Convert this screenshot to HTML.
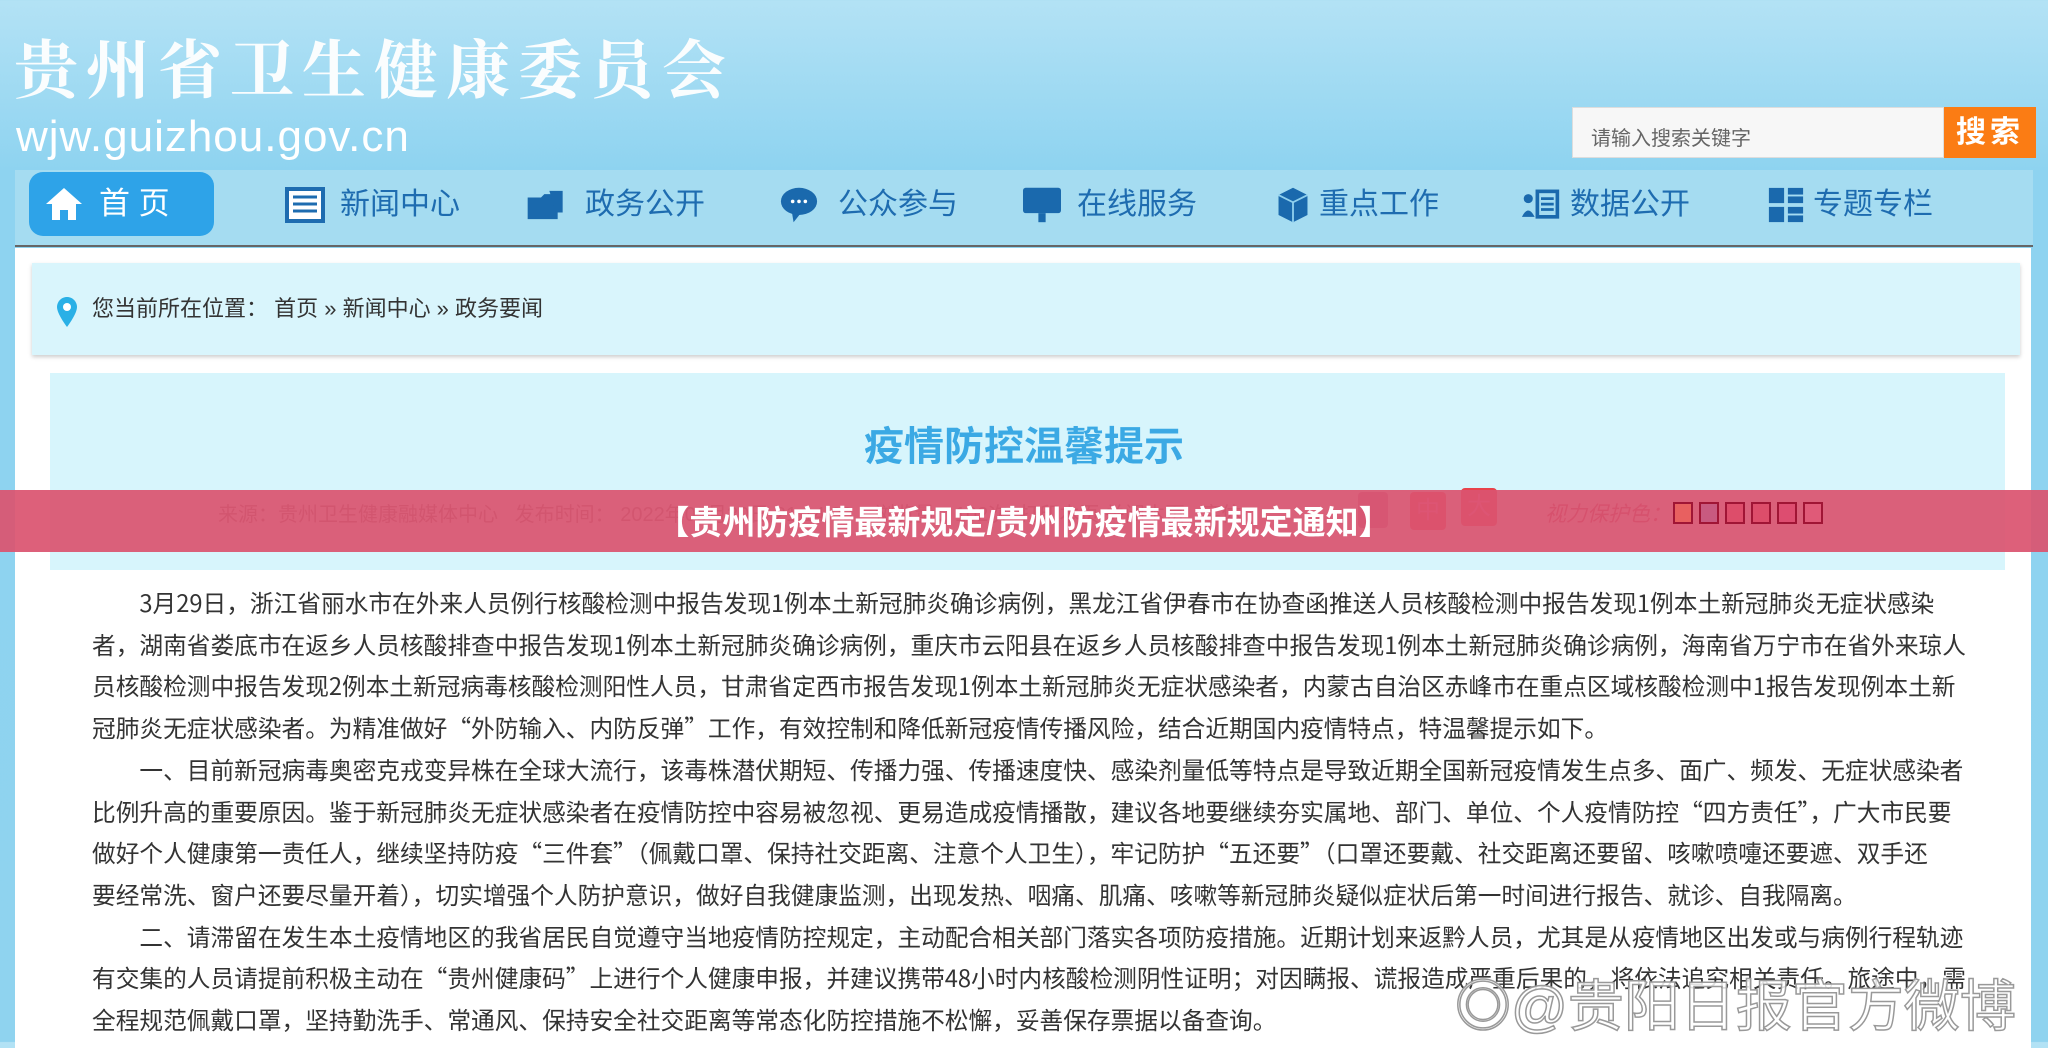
<!DOCTYPE html>
<html><head><meta charset="utf-8"><style>
*{margin:0;padding:0;box-sizing:border-box}
body{width:2048px;height:1042px;overflow:hidden;position:relative;font-family:"Liberation Sans","Noto Sans CJK SC",sans-serif;background:linear-gradient(#b3e2f5,#8ed3f0 170px,#8fd3ef);}
.abs{position:absolute}
.title{left:14px;top:20px;font-family:"Noto Serif CJK SC",serif;font-size:64px;color:#fff;letter-spacing:8px;font-weight:bold;opacity:.95;white-space:nowrap}
.url{left:16px;top:112px;font-size:44px;color:#fff;letter-spacing:1px}
.search{left:1572px;top:107px;width:372px;height:51px;background:#f7f7f7;border:1px solid #ddd;font-size:20px;color:#666;padding:14px 18px}
.sbtn{left:1944px;top:107px;width:92px;height:51px;background:#fb7c14;color:#fff;font-size:30px;font-weight:bold;text-align:center;line-height:51px;letter-spacing:4px}
.nav{left:15px;top:170px;width:2018px;height:77px;background:#a5dcf1;border-bottom:2px solid #666}
.home{left:29px;top:172px;width:185px;height:64px;background:#2ea3e8;border-radius:14px;color:#fff;font-size:31px;line-height:64px;padding-left:70px}
.ni{top:186px;font-size:30px;color:#1e6cb0;line-height:38px}
.ic{top:186px;width:40px;height:38px}
.panel{left:15px;top:248px;width:2016px;height:800px;background:#fff}
.bc{left:32px;top:263px;width:1988px;height:92px;background:#d9f5fc;box-shadow:0 2px 4px #ccc;font-size:22px;color:#333;line-height:92px;padding-left:60px}
.box{left:50px;top:373px;width:1955px;height:197px;background:#d7f5fc}
.h1{left:0;width:2048px;top:414px;text-align:center;font-size:40px;font-weight:bold;color:#3ba9e4}
.meta{left:218px;top:498px;font-size:20px;color:#666}
.band{left:0;top:490px;width:2048px;height:62px;background:rgba(218,84,112,.93)}
.bt{left:0;width:2048px;top:496px;text-align:center;font-size:33px;font-weight:bold;color:#fff}
.txt{left:92px;top:582px;font-family:"Noto Sans CJK SC",sans-serif;font-size:23.7px;color:#333;line-height:41.7px;white-space:nowrap}
.wm{left:1455px;top:962px;font-size:56px;color:rgba(255,255,255,.85);-webkit-text-stroke:1.5px #999;white-space:nowrap}
</style></head><body>
<div class="abs title">贵州省卫生健康委员会</div>
<div class="abs url">wjw.guizhou.gov.cn</div>
<div class="abs search">请输入搜索关键字</div>
<div class="abs sbtn">搜索</div>
<div class="abs nav"></div>
<div class="abs home">首 页</div>
<svg class="abs" style="left:44px;top:186px" width="40" height="36" viewBox="0 0 40 36"><path d="M20 2 L2 18 H8 V34 H16 V24 H24 V34 H32 V18 H38Z" fill="#fff"/></svg>
<svg class="abs ic" style="left:285px" viewBox="0 0 40 38"><rect x="2" y="3" width="36" height="32" fill="#fff" stroke="#1e6cb0" stroke-width="4"/><path d="M8 11h24M8 18h24M8 25h24" stroke="#1e6cb0" stroke-width="3"/></svg>
<div class="abs ni" style="left:340px">新闻中心</div>
<svg class="abs ic" style="left:526px" viewBox="0 0 48 38"><path d="M2 10h16l4-4h16v30H2z" fill="#1a69ad"/><path d="M28 2h16v26h-8z" fill="#1a69ad"/></svg>
<div class="abs ni" style="left:585px">政务公开</div>
<svg class="abs ic" style="left:779px" viewBox="0 0 44 42"><ellipse cx="22" cy="17" rx="20" ry="15" fill="#1a69ad"/><path d="M14 28 L16 40 L24 30Z" fill="#1a69ad"/><circle cx="15" cy="17" r="2" fill="#fff"/><circle cx="22" cy="17" r="2" fill="#fff"/><circle cx="29" cy="17" r="2" fill="#fff"/></svg>
<div class="abs ni" style="left:838px">公众参与</div>
<svg class="abs ic" style="left:1022px" viewBox="0 0 44 42"><rect x="1" y="2" width="42" height="28" rx="3" fill="#1a69ad"/><rect x="18" y="30" width="8" height="10" fill="#1a69ad"/></svg>
<div class="abs ni" style="left:1077px">在线服务</div>
<svg class="abs ic" style="left:1273px" viewBox="0 0 36 42"><path d="M18 2 L34 10 V32 L18 40 L2 32 V10Z" fill="#1a69ad"/><path d="M2 10 L18 18 L34 10" stroke="#8fd0ee" stroke-width="2" fill="none"/><path d="M18 18V40" stroke="#8fd0ee" stroke-width="2"/></svg>
<div class="abs ni" style="left:1319px">重点工作</div>
<svg class="abs ic" style="left:1521px" viewBox="0 0 44 38"><circle cx="8" cy="12" r="5" fill="#1a69ad"/><path d="M1 32 Q8 18 15 32Z" fill="#1a69ad"/><rect x="18" y="4" width="22" height="28" fill="none" stroke="#1a69ad" stroke-width="4"/><path d="M22 12h14M22 18h14M22 24h14" stroke="#1a69ad" stroke-width="3"/></svg>
<div class="abs ni" style="left:1570px">数据公开</div>
<svg class="abs ic" style="left:1766px" viewBox="0 0 40 40"><rect x="2" y="2" width="16" height="16" fill="#1a69ad"/><rect x="22" y="2" width="16" height="7" fill="#1a69ad"/><rect x="22" y="11" width="16" height="7" fill="#1a69ad"/><rect x="2" y="22" width="16" height="16" fill="#1a69ad"/><rect x="22" y="22" width="16" height="7" fill="#1a69ad"/><rect x="22" y="31" width="16" height="7" fill="#1a69ad"/></svg>
<div class="abs ni" style="left:1813px">专题专栏</div>
<div class="abs panel"></div>
<div class="abs bc">您当前所在位置：&nbsp;首页 » 新闻中心 » 政务要闻</div>
<svg class="abs" style="left:56px;top:296px" width="22" height="32" viewBox="0 0 22 32"><path d="M11 1C5 1 1 6 1 11c0 7 10 20 10 20s10-13 10-20C21 6 17 1 11 1z" fill="#2ab0e6"/><circle cx="11" cy="11" r="4" fill="#fff"/></svg>
<div class="abs box"></div>
<div class="abs h1">疫情防控温馨提示</div>
<div class="abs meta">来源：贵州卫生健康融媒体中心&nbsp;&nbsp;&nbsp;发布时间：&nbsp;2022年03月30日 21:14:00&nbsp;&nbsp;&nbsp;&nbsp;浏览量：102次&nbsp;&nbsp;打印本页&nbsp;关闭本页&nbsp;&nbsp;&nbsp;字体</div>
<div class="abs" style="left:1358px;top:492px;width:30px;height:36px;background:#a05a8a;border-radius:4px;opacity:.8"></div>
<div class="abs" style="left:1410px;top:492px;width:36px;height:38px;background:#e8424b;border-radius:4px;color:#f6a;font-size:24px;text-align:center;line-height:38px">中</div>
<div class="abs" style="left:1461px;top:488px;width:36px;height:38px;background:#e8424b;border-radius:4px;color:#f6a;font-size:24px;text-align:center;line-height:38px">大</div>
<div class="abs" style="left:1545px;top:498px;font-size:21px;color:#a0304a;font-style:italic">视力保护色：</div>
<div class="abs band"></div>
<div class="abs" style="left:1673px;top:502px;display:flex;gap:6px">
<i style="width:20px;height:22px;border:2px solid #a01535;background:#e86060"></i><i style="width:20px;height:22px;border:2px solid #a01535;background:#c85a80"></i><i style="width:20px;height:22px;border:2px solid #a01535;background:#dd4d6a"></i><i style="width:20px;height:22px;border:2px solid #a01535;background:#dd4d6a"></i><i style="width:20px;height:22px;border:2px solid #a01535;background:#dd4d70"></i><i style="width:20px;height:22px;border:2px solid #a01535;background:#e05a78"></i></div>
<div class="abs bt">【贵州防疫情最新规定/贵州防疫情最新规定通知】</div>
<div class="abs txt">&emsp;&emsp;3月29日，浙江省丽水市在外来人员例行核酸检测中报告发现1例本土新冠肺炎确诊病例，黑龙江省伊春市在协查函推送人员核酸检测中报告发现1例本土新冠肺炎无症状感染<br>者，湖南省娄底市在返乡人员核酸排查中报告发现1例本土新冠肺炎确诊病例，重庆市云阳县在返乡人员核酸排查中报告发现1例本土新冠肺炎确诊病例，海南省万宁市在省外来琼人<br>员核酸检测中报告发现2例本土新冠病毒核酸检测阳性人员，甘肃省定西市报告发现1例本土新冠肺炎无症状感染者，内蒙古自治区赤峰市在重点区域核酸检测中1报告发现例本土新<br>冠肺炎无症状感染者。为精准做好“外防输入、内防反弹”工作，有效控制和降低新冠疫情传播风险，结合近期国内疫情特点，特温馨提示如下。<br>&emsp;&emsp;一、目前新冠病毒奥密克戎变异株在全球大流行，该毒株潜伏期短、传播力强、传播速度快、感染剂量低等特点是导致近期全国新冠疫情发生点多、面广、频发、无症状感染者<br>比例升高的重要原因。鉴于新冠肺炎无症状感染者在疫情防控中容易被忽视、更易造成疫情播散，建议各地要继续夯实属地、部门、单位、个人疫情防控“四方责任”，广大市民要<br>做好个人健康第一责任人，继续坚持防疫“三件套”（佩戴口罩、保持社交距离、注意个人卫生），牢记防护“五还要”（口罩还要戴、社交距离还要留、咳嗽喷嚏还要遮、双手还<br>要经常洗、窗户还要尽量开着），切实增强个人防护意识，做好自我健康监测，出现发热、咽痛、肌痛、咳嗽等新冠肺炎疑似症状后第一时间进行报告、就诊、自我隔离。<br>&emsp;&emsp;二、请滞留在发生本土疫情地区的我省居民自觉遵守当地疫情防控规定，主动配合相关部门落实各项防疫措施。近期计划来返黔人员，尤其是从疫情地区出发或与病例行程轨迹<br>有交集的人员请提前积极主动在“贵州健康码”上进行个人健康申报，并建议携带48小时内核酸检测阴性证明；对因瞒报、谎报造成严重后果的，将依法追究相关责任。旅途中，需<br>全程规范佩戴口罩，坚持勤洗手、常通风、保持安全社交距离等常态化防控措施不松懈，妥善保存票据以备查询。</div>
<div class="abs wm">◎@贵阳日报官方微博</div>
</body></html>
